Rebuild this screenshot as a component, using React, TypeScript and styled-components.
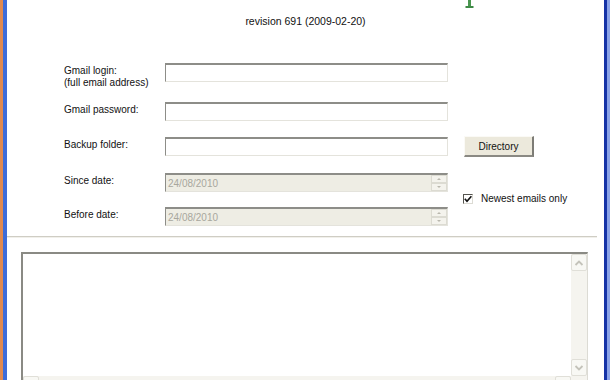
import styled, { createGlobalStyle } from 'styled-components'

const GlobalStyle = createGlobalStyle`
  html, body {
    margin: 0;
    padding: 0;
    background: #e0894f;
  }
  body {
    width: 610px;
    height: 380px;
    overflow: hidden;
    font-family: "Liberation Sans", Arial, sans-serif;
  }
`

const Desktop = styled.div`
  width: 610px;
  height: 380px;
  display: flex;
  overflow: hidden;
  background: #e0894f;
`

const LeftEdge = styled.div`
  width: 3px;
  flex-shrink: 0;
  background: #e0894f;
`

const RightEdge = styled.div`
  width: 3px;
  flex-shrink: 0;
  background: #8aa2e6;
`

const Window = styled.div`
  flex: 1;
  min-width: 0;
  display: flex;
  flex-direction: column;
  background: #fff;
  border-left: 4px solid #3d6cd9;
  border-right: 3px solid #1532a6;
`

const Header = styled.header`
  display: flex;
  flex-direction: column;
`

const LogoRow = styled.div`
  height: 8px;
  padding-left: 458px;
  line-height: 0;
`

const Revision = styled.div`
  margin-top: 7px;
  font-size: 10.5px;
  line-height: 13px;
  color: #111;
  text-align: center;
`

const Form = styled.div`
  margin-top: 35px;
  padding-left: 57px;
  display: grid;
  grid-template-columns: 101px 283px 15px auto;
  grid-template-rows: 39px 35px 36px 34px 19px;
  align-items: start;
`

const Label = styled.div`
  grid-column: 1;
  padding-top: 2px;
  font-size: 10px;
  line-height: 12px;
  color: #111;
`

const TextInput = styled.input`
  grid-column: 2;
  box-sizing: border-box;
  width: 283px;
  height: 19px;
  margin: 0;
  padding: 0 3px;
  border-top: 2px solid #8d8d88;
  border-left: 1px solid #8d8d88;
  border-right: 1px solid #e4e3dc;
  border-bottom: 1px solid #e4e3dc;
  background: #fff;
  font-family: inherit;
  font-size: 10px;
  outline: none;
`

const DateField = styled.div`
  grid-column: 2;
  box-sizing: border-box;
  width: 283px;
  height: 19px;
  display: flex;
  align-items: center;
  justify-content: space-between;
  padding-left: 2px;
  border-top: 2px solid #8d8d88;
  border-left: 1px solid #8d8d88;
  border-right: 1px solid #e4e3dc;
  border-bottom: 1px solid #e4e3dc;
  background: #eeede4;
  font-size: 10px;
  color: #a8a79d;
`

const Spinner = styled.div`
  width: 16px;
  height: 16px;
  display: flex;
  flex-direction: column;
`

const SpinButton = styled.div<{ $down?: boolean }>`
  flex: 1;
  box-sizing: border-box;
  display: flex;
  align-items: center;
  justify-content: center;
  border: 1px solid #dcdbd2;
  background: #f4f3ed;
  &::after {
    content: '';
    border-left: 2px solid transparent;
    border-right: 2px solid transparent;
    ${p => (p.$down ? 'border-top: 2px solid #b9b8ae;' : 'border-bottom: 2px solid #b9b8ae;')}
  }
`

const Button = styled.button`
  grid-column: 4;
  grid-row: 3;
  margin: -1px 0 0 1px;
  width: 70px;
  height: 21px;
  padding: 0;
  background: #ece9dc;
  border-top: 1px solid #fbfaf6;
  border-left: 1px solid #fbfaf6;
  border-right: 2px solid #7d7c76;
  border-bottom: 2px solid #8a8983;
  font-family: inherit;
  font-size: 10px;
  color: #111;
`

const CheckRow = styled.label`
  grid-column: 4;
  grid-row: 4 / span 2;
  padding-top: 20px;
  display: flex;
  align-items: center;
  gap: 8px;
  font-size: 10px;
  color: #111;
`

const CheckBox = styled.span`
  box-sizing: border-box;
  width: 10px;
  height: 10px;
  display: flex;
  align-items: center;
  justify-content: center;
  border-top: 1px solid #55544f;
  border-left: 1px solid #55544f;
  border-right: 1px solid #dcdbd4;
  border-bottom: 1px solid #dcdbd4;
  background: #fff;
`

const Separator = styled.hr`
  margin: 10px 7px 0 0;
  height: 0;
  border: none;
  border-top: 1px solid #cfcdc4;
  border-bottom: 1px solid #f1f0eb;
`

const LogBox = styled.div`
  flex-shrink: 0;
  margin: 14px 16px 0 14px;
  height: 142px;
  display: grid;
  grid-template-columns: 1fr 16px;
  grid-template-rows: 122px 17px;
  border-top: 2px solid #8a8a84;
  border-left: 2px solid #8a8a84;
  border-right: 1px solid #dcdbd4;
  border-bottom: 1px solid #dcdbd4;
  background: #fff;
`

const LogText = styled.div`
  grid-column: 1;
  grid-row: 1;
`

const ScrollTrack = styled.div<{ $horizontal?: boolean }>`
  display: flex;
  flex-direction: ${p => (p.$horizontal ? 'row' : 'column')};
  justify-content: space-between;
  background: #f5f4ef;
  grid-column: ${p => (p.$horizontal ? 1 : 2)};
  grid-row: ${p => (p.$horizontal ? 2 : 1)};
`

const Corner = styled.div`
  grid-column: 2;
  grid-row: 2;
  background: #f5f4ef;
`

const ScrollButton = styled.div`
  box-sizing: border-box;
  width: 16px;
  height: 17px;
  display: flex;
  align-items: center;
  justify-content: center;
  border: 1px solid #e0dfd8;
  border-radius: 2px;
  background: #f8f8f4;
`

const Chevron = ({ rotate }: { rotate: number }) => (
  <svg width="10" height="8" viewBox="0 0 10 8" style={{ transform: `rotate(${rotate}deg)` }}>
    <polyline points="1.5,6 5,2.5 8.5,6" fill="none" stroke="#c4c3ba" strokeWidth="1.8" />
  </svg>
)

const LogoStem = () => (
  <svg width="10" height="8" viewBox="0 0 10 8">
    <rect x="3" y="0" width="3" height="7" fill="#4a9650" />
    <rect x="0.5" y="6" width="8" height="2" fill="#3f8a46" />
  </svg>
)

const Check = () => (
  <svg width="8" height="8" viewBox="0 0 8 8">
    <polyline points="0.8,3.8 3,6.2 7.4,1.2" fill="none" stroke="#111" strokeWidth="1.7" />
  </svg>
)

const DateInput = ({ value }: { value: string }) => (
  <DateField>
    {value}
    <Spinner>
      <SpinButton />
      <SpinButton $down />
    </Spinner>
  </DateField>
)

export default function App() {
  return (
    <>
      <GlobalStyle />
      <Desktop>
        <LeftEdge />
        <Window>
          <Header>
            <LogoRow>
              <LogoStem />
            </LogoRow>
            <Revision>revision 691 (2009-02-20)</Revision>
          </Header>

          <Form>
            <Label>
              Gmail login:
              <br />
              (full email address)
            </Label>
            <TextInput />

            <Label>Gmail password:</Label>
            <TextInput type="password" />

            <Label>Backup folder:</Label>
            <TextInput />
            <Button>Directory</Button>

            <Label>Since date:</Label>
            <DateInput value="24/08/2010" />
            <CheckRow>
              <CheckBox>
                <Check />
              </CheckBox>
              Newest emails only
            </CheckRow>

            <Label>Before date:</Label>
            <DateInput value="24/08/2010" />
          </Form>

          <Separator />

          <LogBox>
            <LogText />
            <ScrollTrack>
              <ScrollButton>
                <Chevron rotate={0} />
              </ScrollButton>
              <ScrollButton>
                <Chevron rotate={180} />
              </ScrollButton>
            </ScrollTrack>
            <ScrollTrack $horizontal>
              <ScrollButton>
                <Chevron rotate={270} />
              </ScrollButton>
              <ScrollButton>
                <Chevron rotate={90} />
              </ScrollButton>
            </ScrollTrack>
            <Corner />
          </LogBox>
        </Window>
        <RightEdge />
      </Desktop>
    </>
  )
}
